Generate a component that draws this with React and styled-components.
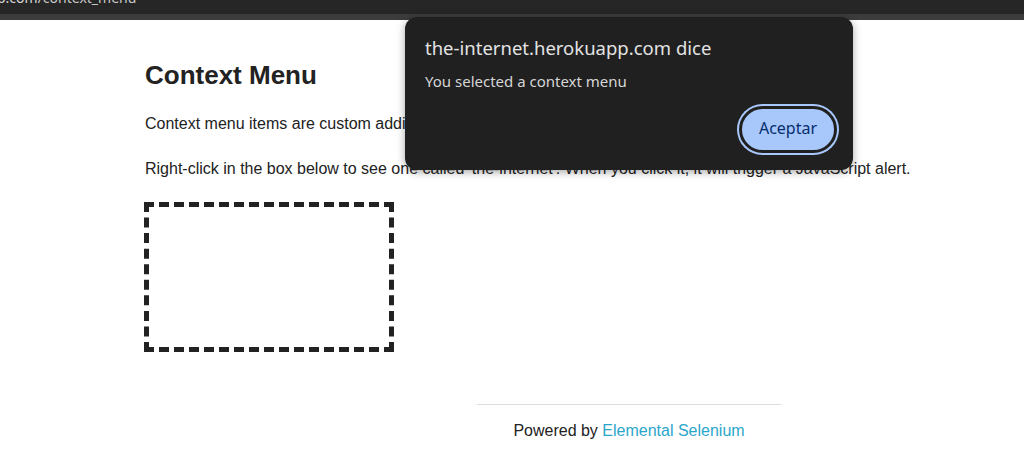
import React from "react";
import styled, { createGlobalStyle } from "styled-components";

const GlobalStyle = createGlobalStyle`
  html, body {
    margin: 0;
    padding: 0;
    background: #fff;
  }
  body {
    font-family: "Liberation Sans", Arial, sans-serif;
    color: #222;
    width: 1024px;
    height: 465px;
    overflow: hidden;
    position: relative;
  }
`;

const Chrome = styled.div`
  height: 20px;
  display: flex;
  flex-direction: column;
`;

const AddressBar = styled.div`
  height: 14px;
  background: #262626;
  overflow: hidden;
  display: flex;
  align-items: flex-end;
`;

const Url = styled.span`
  font-family: "Noto Sans", sans-serif;
  font-size: 14px;
  line-height: 14px;
  color: #c8c8c8;
  margin-bottom: 9px;
  margin-left: -3px;
  white-space: nowrap;

  b {
    font-weight: normal;
    color: #d7d7d7;
  }
`;

const TabStrip = styled.div`
  height: 6px;
  background: #3c3c3c;
`;

const Content = styled.main`
  padding: 42px 0 0 144px;
`;

const Title = styled.h3`
  margin: 0 0 26px 1px;
  font-size: 26px;
  line-height: 26px;
  font-weight: bold;
  color: #222;
`;

const Text = styled.p`
  margin: 0 0 25px 1px;
  font-size: 16px;
  line-height: 20px;
  color: #222;
  white-space: nowrap;
`;

const HotSpot = styled.div`
  box-sizing: border-box;
  width: 250px;
  height: 150px;
  margin-top: -2px;
  border: 5px dashed #222;
`;

const Footer = styled.footer`
  margin: 52px 0 0 477px;
  width: 304px;
  border-top: 1px solid #ddd;
  padding-top: 16px;
  text-align: center;
  font-size: 16px;
  line-height: 20px;
  color: #222;

  a {
    color: #2ba6cb;
    text-decoration: none;
  }
`;

const Dialog = styled.div`
  position: absolute;
  left: 405px;
  top: 17px;
  width: 448px;
  height: 153px;
  box-sizing: border-box;
  background: #202020;
  border-radius: 12px;
  box-shadow: 0 2px 8px rgba(0, 0, 0, 0.35);
  padding: 19px 16px 16px 20px;
  display: flex;
  flex-direction: column;
  font-family: "Noto Sans", "DejaVu Sans", sans-serif;
`;

const DialogTitle = styled.div`
  font-size: 18.5px;
  line-height: 24px;
  color: #e3e3e3;
`;

const DialogMessage = styled.div`
  margin-top: 11px;
  font-size: 15px;
  line-height: 20px;
  color: #d6d6d6;
`;

const Actions = styled.div`
  margin-top: auto;
  display: flex;
  justify-content: flex-end;
`;

const OkButton = styled.button`
  box-sizing: border-box;
  height: 47px;
  width: 98px;
  border-radius: 24px;
  border: 3px solid #202020;
  background: #a8c7fa;
  box-shadow: 0 0 0 2px #a8c7fa;
  color: #062e6f;
  font-family: "Noto Sans", "DejaVu Sans", sans-serif;
  font-size: 16px;
  padding: 0 0 3px;
  position: relative;
  top: -1px;
  right: 0;
`;

export default function App() {
  return (
    <>
      <GlobalStyle />
      <Chrome>
        <AddressBar>
          <Url>
            <b>p.com</b>/context_menu
          </Url>
        </AddressBar>
        <TabStrip />
      </Chrome>
      <Content>
        <Title>Context Menu</Title>
        <Text>
          Context menu items are custom additions that appear in the right-click menu.
        </Text>
        <Text>
          Right-click in the box below to see one called 'the-internet'. When you click it, it will
          trigger a JavaScript alert.
        </Text>
        <HotSpot />
      </Content>
      <Footer>
        Powered by <a href="#">Elemental Selenium</a>
      </Footer>
      <Dialog>
        <DialogTitle>the-internet.herokuapp.com dice</DialogTitle>
        <DialogMessage>You selected a context menu</DialogMessage>
        <Actions>
          <OkButton>Aceptar</OkButton>
        </Actions>
      </Dialog>
    </>
  );
}
